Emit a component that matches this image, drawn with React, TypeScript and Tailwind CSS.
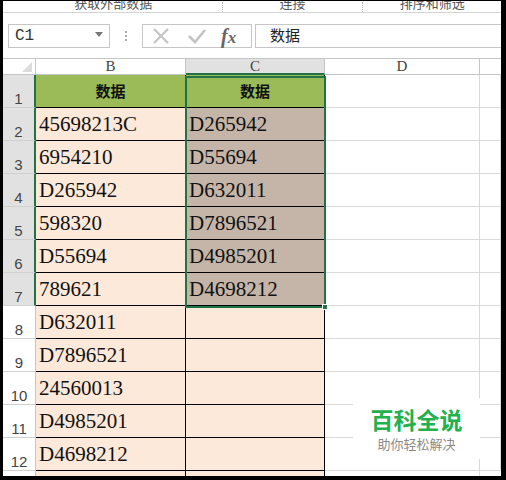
const cellFont = { fontFamily: '"Liberation Serif", "Noto Sans CJK SC", serif' };

type Row = { b: string; c: string };

const rows: Row[] = [
  { b: "45698213C", c: "D265942" },
  { b: "6954210", c: "D55694" },
  { b: "D265942", c: "D632011" },
  { b: "598320", c: "D7896521" },
  { b: "D55694", c: "D4985201" },
  { b: "789621", c: "D4698212" },
  { b: "D632011", c: "" },
  { b: "D7896521", c: "" },
  { b: "24560013", c: "" },
  { b: "D4985201", c: "" },
  { b: "D4698212", c: "" },
];

function RowHead({ n, selected }: { n: number; selected: boolean }) {
  return (
    <div
      className={`flex h-[33px] items-end justify-center border-b border-[#d0d0d0] pb-[1px] text-[15px] leading-none text-[#444] ${
        selected ? "bg-[#e1e1e1] border-r-2 border-r-[#217346]" : "bg-white border-r border-r-[#c6c6c6]"
      }`}
      style={{ fontFamily: '"Liberation Sans", sans-serif' }}
    >
      {n}
    </div>
  );
}

function Cell({ text, tone }: { text: string; tone: "peach" | "tan" }) {
  return (
    <div
      className={`flex h-[33px] items-end border-b border-r border-black pb-[5px] pl-[3px] text-[21px] leading-none text-[#111] ${
        tone === "tan" ? "bg-[#c5b5a8]" : "bg-[#fde9d9]"
      }`}
      style={cellFont}
    >
      {text}
    </div>
  );
}

function Grid() {
  return (
    <div className="h-[33px] border-b border-r border-[#d9d9d9] bg-white" />
  );
}

export default function App() {
  return (
    <div className="h-[480px] w-[506px] overflow-hidden bg-black pb-[4px] pl-[3px] pr-[5px] pt-[1px]">
      <div className="h-[475px] w-[498px] overflow-hidden bg-white">
        {/* ribbon group labels, cut off at the top like in the screenshot */}
        <div
          className="flex h-[12px] overflow-hidden border-b border-[#d5d5d5] text-[13px] leading-none text-[#555]"
          style={{ fontFamily: '"Noto Sans CJK SC", sans-serif' }}
        >
          <div className="-mt-[5px] w-[219px] text-center pl-[2px]">获取外部数据</div>
          <div className="mt-[1px] h-[10px] border-l border-dotted border-[#bbb]" />
          <div className="-mt-[5px] w-[140px] text-center">连接</div>
          <div className="mt-[1px] h-[10px] border-l border-dotted border-[#bbb]" />
          <div className="-mt-[5px] w-[138px] text-center">排序和筛选</div>
        </div>

        {/* formula bar */}
        <div className="flex h-[45px] items-center pl-[5px]">
          <div className="flex h-[24px] w-[102px] items-center justify-between border border-[#c6c6c6] pl-[6px] pr-[6px]">
            <span className="text-[16px] leading-none text-[#333]" style={{ fontFamily: '"Liberation Mono", monospace' }}>
              C1
            </span>
            <span className="mt-[-2px] h-0 w-0 border-l-[4px] border-r-[4px] border-t-[5px] border-l-transparent border-r-transparent border-t-[#777]" />
          </div>
          <div className="ml-[12px] flex w-[7px] flex-col items-center gap-[2px]">
            <span className="h-[2px] w-[2px] bg-[#aaa]" />
            <span className="h-[2px] w-[2px] bg-[#aaa]" />
            <span className="h-[2px] w-[2px] bg-[#aaa]" />
          </div>
          <div className="ml-[13px] flex h-[24px] w-[110px] items-center border border-[#c6c6c6]">
            <svg width="20" height="18" viewBox="0 0 20 18" className="ml-[8px]">
              <path d="M3 2 L17 16 M17 2 L3 16" stroke="#c4c4c4" strokeWidth="2.2" fill="none" />
            </svg>
            <svg width="20" height="18" viewBox="0 0 20 18" className="ml-[16px]">
              <path d="M2 9 L8 15 L18 3" stroke="#c4c4c4" strokeWidth="2.6" fill="none" />
            </svg>
            <span
              className="ml-[14px] text-[20px] font-bold italic leading-none text-[#666]"
              style={{ fontFamily: '"Liberation Serif", serif' }}
            >
              f<span className="text-[17px]">x</span>
            </span>
          </div>
          <div
            className="ml-[3px] flex h-[24px] flex-1 items-center border border-r-0 border-[#c6c6c6] pl-[14px] text-[15px] text-[#222]"
            style={{ fontFamily: '"Noto Sans CJK SC", sans-serif' }}
          >
            数据
          </div>
        </div>

        {/* sheet */}
        <div className="relative grid grid-cols-[33px_150px_139px_155px_21px]">
          <div className="relative h-[17px] border-b border-r border-t border-[#c6c6c6] bg-white">
            <span className="absolute bottom-[2px] right-[3px] h-0 w-0 border-b-[10px] border-l-[10px] border-b-[#dcdcdc] border-l-transparent" />
          </div>
          <div className="flex h-[17px] items-center justify-center border-b border-r border-t border-[#c6c6c6] bg-white text-[15px] leading-none text-[#444]" style={cellFont}>
            B
          </div>
          <div className="flex h-[17px] items-center justify-center border-b-2 border-r border-t border-[#c6c6c6] border-b-[#217346] bg-[#e1e1e1] text-[15px] leading-none text-[#444]" style={cellFont}>
            C
          </div>
          <div className="flex h-[17px] items-center justify-center border-b border-r border-t border-[#c6c6c6] bg-white text-[15px] leading-none text-[#444]" style={cellFont}>
            D
          </div>
          <div className="h-[17px] border-b border-t border-[#c6c6c6] bg-white" />

          <RowHead n={1} selected />
          <div
            className="flex h-[33px] items-center justify-center border-b border-r border-black bg-[#9bbb59] text-[15px] font-bold text-[#111]"
            style={{ fontFamily: '"Noto Sans CJK SC", sans-serif' }}
          >
            数据
          </div>
          <div
            className="flex h-[33px] items-center justify-center border-b border-r border-black bg-[#9bbb59] text-[15px] font-bold text-[#111]"
            style={{ fontFamily: '"Noto Sans CJK SC", sans-serif' }}
          >
            数据
          </div>
          <Grid />
          <Grid />

          {rows.map((r, i) => (
            <>
              <RowHead key={`h${i}`} n={i + 2} selected={i < 6} />
              <Cell key={`b${i}`} text={r.b} tone="peach" />
              <Cell key={`c${i}`} text={r.c} tone={i < 6 ? "tan" : "peach"} />
              <Grid key={`d${i}`} />
              <Grid key={`e${i}`} />
            </>
          ))}

          <div className="h-[6px] border-r border-[#c6c6c6] bg-white" />
          <div className="h-[6px] border-r border-black bg-[#fde9d9]" />
          <div className="h-[6px] border-r border-black bg-[#fde9d9]" />
          <div className="h-[6px] border-r border-[#d9d9d9] bg-white" />
          <div className="h-[6px] bg-white" />

          {/* selection outline C1:C7 + fill handle */}
          <div className="pointer-events-none absolute left-[182px] top-[18px] h-[232px] w-[141px] border-2 border-[#217346]" />
          <div className="absolute left-[319px] top-[246px] h-[6px] w-[6px] border border-white bg-[#217346]" />

          {/* watermark */}
          <div
            className="absolute left-[350px] top-[340px] flex h-[61px] w-[127px] flex-col items-center justify-center bg-white"
            style={{ fontFamily: '"Noto Sans CJK SC", sans-serif' }}
          >
            <div className="text-[23px] font-bold leading-[27px] text-[#22b14c]">百科全说</div>
            <div className="mt-[3px] text-[13px] leading-[15px] text-[#8a8a8a]">助你轻松解决</div>
          </div>
        </div>
      </div>
    </div>
  );
}
